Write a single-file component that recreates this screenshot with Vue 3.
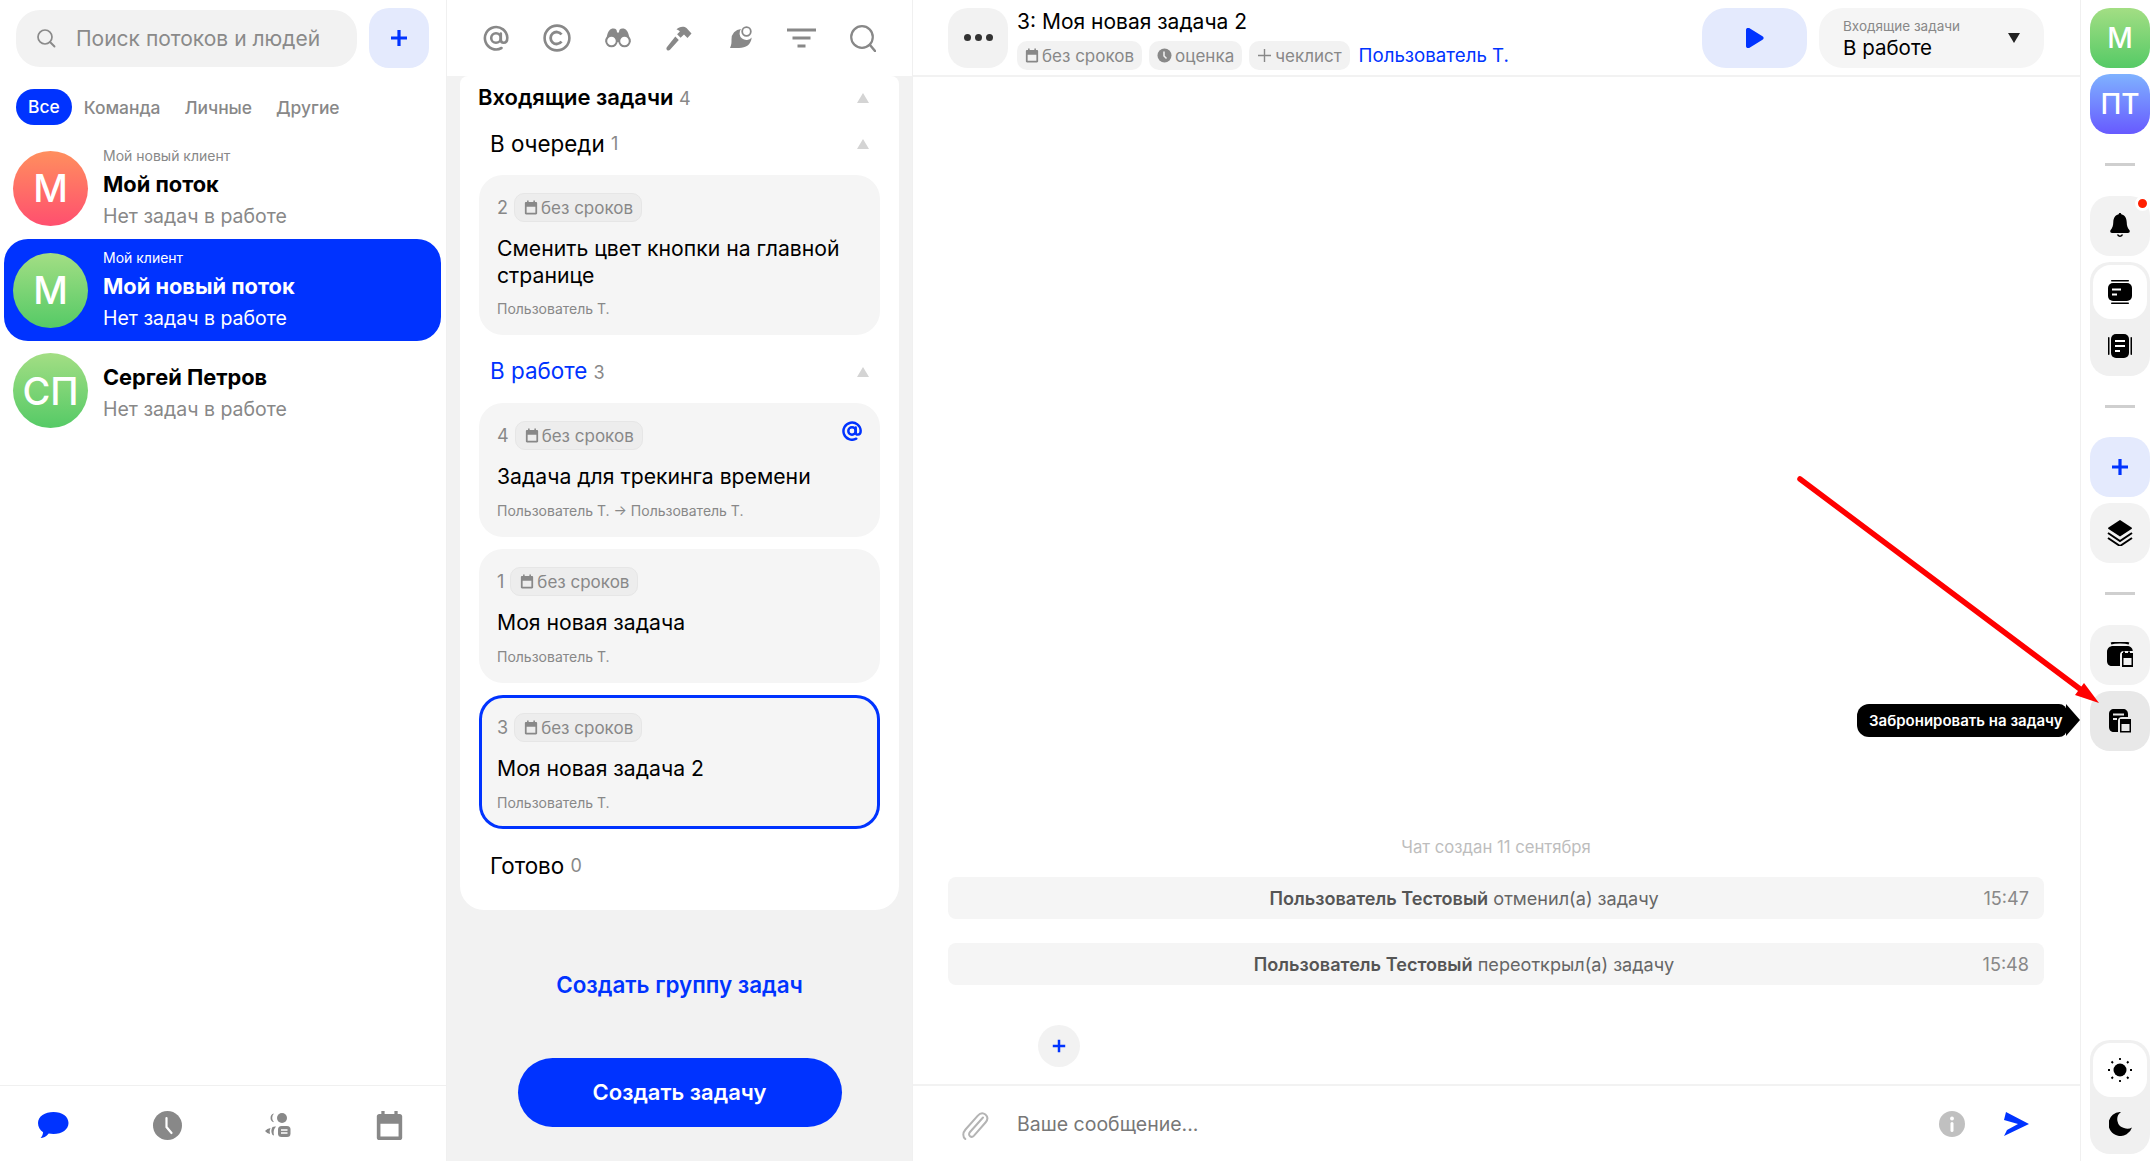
<script setup>
const tabs = ['Все', 'Команда', 'Личные', 'Другие']
const streams = [
  { id: 1, client: 'Мой новый клиент', title: 'Мой поток', initials: 'М', tone: 'red' },
  { id: 2, client: 'Мой клиент', title: 'Мой новый поток', initials: 'М', tone: 'green', active: true },
  { id: 3, client: '', title: 'Сергей Петров', initials: 'СП', tone: 'green' },
]
const queue = [
  { n: 2, title: 'Сменить цвет кнопки на главной странице', who: 'Пользователь Т.' },
]
const working = [
  { n: 4, title: 'Задача для трекинга времени', who: 'Пользователь Т. → Пользователь Т.', mention: true },
  { n: 1, title: 'Моя новая задача', who: 'Пользователь Т.' },
  { n: 3, title: 'Моя новая задача 2', who: 'Пользователь Т.', active: true },
]
const events = [
  { who: 'Пользователь Тестовый', what: 'отменил(а) задачу', time: '15:47' },
  { who: 'Пользователь Тестовый', what: 'переоткрыл(а) задачу', time: '15:48' },
]
</script>

<template>
  <div class="app">
    <svg class="defs" width="0" height="0" aria-hidden="true">
      <defs>
        <symbol id="cal" viewBox="0 0 16 16">
          <path fill="currentColor" d="M3.500 0h1.800v1.600h5.400V0h1.800v1.600h1.200c.7 0 1.300.6 1.300 1.300v11.800c0 .7-.6 1.300-1.300 1.300H2.300c-.7 0-1.300-.6-1.300-1.300V2.900c0-.7.6-1.300 1.300-1.300h1.200V0zM3 7v7h10V7H3z"/>
        </symbol>
        <symbol id="plus" viewBox="0 0 18 18">
          <path fill="currentColor" d="M7.400 1h3.200v6.400H17v3.200h-6.400V17H7.400v-6.400H1V7.400h6.400z"/>
        </symbol>
      </defs>
    </svg>

    <aside class="streams">
      <div class="search-row">
        <label class="search">
          <svg class="search-ico" viewBox="0 0 20 20" width="20" height="20"><circle cx="9" cy="9" r="7" fill="none" stroke="#8a8a8a" stroke-width="1.700"/><path d="M14 14l4.500 4.500" stroke="#8a8a8a" stroke-width="1.900" stroke-linecap="round"/></svg>
          <span>Поиск потоков и людей</span>
        </label>
        <button class="add-btn"><svg width="18" height="18"><use href="#plus"/></svg></button>
      </div>
      <nav class="tabs">
        <span v-for="(t, i) in tabs" :key="t" class="tab" :class="{ on: i === 0 }">{{ t }}</span>
      </nav>
      <ul class="stream-list">
        <li v-for="s in streams" :key="s.id" class="stream" :class="{ active: s.active, plain: !s.client }">
          <div class="avatar" :class="s.tone">{{ s.initials }}</div>
          <div class="stream-text">
            <div v-if="s.client" class="client">{{ s.client }}</div>
            <div class="stream-title">{{ s.title }}</div>
            <div class="stream-sub">Нет задач в работе</div>
          </div>
        </li>
      </ul>
      <footer class="bottom-nav">
        <svg width="31" height="27" viewBox="0 0 31 27"><path fill="#0033ff" d="M15.500 0C24 0 30.500 4.400 30.500 11c0 6.500-6.500 11-15 11-1.700 0-3.300-.2-4.800-.5C8.500 24.500 5 26 2.600 26c1.500-1.500 2.200-3.400 2.500-5.700C1.900 18.200 0 15 0 11 0 4.400 7 0 15.500 0z"/></svg>
        <svg width="29" height="29" viewBox="0 0 29 29"><circle cx="14.500" cy="14.500" r="14.500" fill="#888"/><path d="M13.500 7v9l5 6" fill="none" stroke="#fff" stroke-width="2.200" stroke-linecap="round"/></svg>
        <svg width="26" height="26" viewBox="0 0 26 26"><circle cx="17" cy="6" r="5" fill="#888"/><path fill="#888" d="M9 1.600a4.400 4.400 0 0 0 0 8.600A6 6 0 0 1 9 1.600zM11 14.500a10 10 0 0 0-2 9 7 7 0 0 1-1.500-.6 8 8 0 0 1 0-8A7 7 0 0 1 11 14.500zM5.500 16a8 8 0 0 0-.5 6A8 8 0 0 1 0 19a8 8 0 0 1 5.500-3z"/><rect x="13" y="14" width="12.500" height="11" rx="3.500" fill="#888"/><path d="M16 18h6.500M16 21h6.500" stroke="#fff" stroke-width="1.500"/></svg>
        <svg class="nav-cal" width="29" height="29"><use href="#cal"/></svg>
      </footer>
    </aside>

    <section class="tasks">
      <div class="tools">
        <svg width="26" height="26" viewBox="0 0 26 26" fill="none" stroke="#888" stroke-width="2.600"><circle cx="13" cy="13" r="4.800"/><path d="M17.800 8.500v6c0 2 1 3.200 2.800 3.200 2 0 3.700-1.800 3.700-5A11.200 11.200 0 1 0 18.500 23" stroke-linecap="round"/></svg>
        <svg width="28" height="28" viewBox="0 0 28 28" fill="none" stroke="#888"><circle cx="14" cy="14" r="12.400" stroke-width="2.600"/><path d="M18.500 10.500A6 6 0 1 0 18.500 17.500" stroke-width="2.800"/></svg>
        <svg width="26" height="20" viewBox="0 0 26 20"><path fill="#888" d="M2 8C3 3 5 .5 8.500.5c2.500 0 3.500 1.500 3.500 4h2c0-2.500 1-4 3.500-4C21 .5 23 3 24 8l1.500 6h-25z"/><circle cx="6.500" cy="13" r="5.300" fill="#fff" stroke="#888" stroke-width="2"/><circle cx="19.500" cy="13" r="5.300" fill="#fff" stroke="#888" stroke-width="2"/></svg>
        <svg width="26" height="25" viewBox="0 0 26 25"><path fill="#888" d="M10.500 3.500C13 .5 18 0 20.500 2l5 5.500-4 4.500-3.500-3.500-3.400 3.300-3.500-3.500 2.800-2.800C13 4.500 11.800 3.700 10.500 3.500zM9.300 10.500l3.500 3.500L4 23.800c-.9.900-2.200.9-3 .1-.8-.8-.8-2.100 0-3z"/></svg>
        <svg width="25" height="25" viewBox="0 0 25 25"><path fill="#888" d="M13 3a10 10 0 0 0-9.500 10.500c0 2.700.2 5-1.500 8.500h9c7 0 12-3.500 12.700-10.500A6.500 6.500 0 0 1 13 3z"/><circle cx="18.500" cy="5.500" r="4.300" fill="#fff" stroke="#888" stroke-width="1.800"/></svg>
        <svg width="31" height="20" viewBox="0 0 31 20"><path d="M1 2h29M6.500 10h18M11.500 18h8" stroke="#888" stroke-width="3"/></svg>
        <svg width="27" height="27" viewBox="0 0 27 27" fill="none" stroke="#888"><circle cx="13" cy="12" r="10.800" stroke-width="2.200"/><path d="M21 20l5 6" stroke-width="2.500" stroke-linecap="round"/></svg>
      </div>
      <div class="board">
        <div class="board-card">
          <header class="group-head top">
            <h2>Входящие задачи <small>4</small></h2><i class="tri"></i>
          </header>

          <header class="group-head">
            <h3>В очереди <small class="up">1</small></h3><i class="tri"></i>
          </header>
          <article v-for="t in queue" :key="t.n" class="task">
            <div class="task-top"><span class="num">{{ t.n }}</span><span class="chip"><svg width="14" height="15"><use href="#cal"/></svg>без сроков</span></div>
            <div class="task-title">{{ t.title }}</div>
            <div class="who">{{ t.who }}</div>
          </article>

          <header class="group-head second">
            <h3 class="blue">В работе <small>3</small></h3><i class="tri"></i>
          </header>
          <div class="task-stack">
            <article v-for="t in working" :key="t.n" class="task" :class="{ current: t.active }">
              <div class="task-top">
                <span class="num">{{ t.n }}</span><span class="chip"><svg width="14" height="15"><use href="#cal"/></svg>без сроков</span>
                <svg v-if="t.mention" class="mention" width="20" height="20" viewBox="0 0 26 26" fill="none" stroke="#0033ff" stroke-width="3.200"><circle cx="13" cy="13" r="4.800"/><path d="M17.800 8.500v6c0 2 1 3.200 2.800 3.200 2 0 3.700-1.800 3.700-5A11.200 11.200 0 1 0 18.500 23" stroke-linecap="round"/></svg>
              </div>
              <div class="task-title">{{ t.title }}</div>
              <div class="who">{{ t.who }}</div>
            </article>
          </div>

          <header class="group-head done">
            <h3>Готово <small class="up">0</small></h3>
          </header>
        </div>
        <a class="new-group">Создать группу задач</a>
        <button class="new-task">Создать задачу</button>
      </div>
    </section>

    <main class="chat">
      <header class="chat-head">
        <button class="dots"><i></i><i></i><i></i></button>
        <div class="head-info">
          <div class="head-title">3: Моя новая задача 2</div>
          <div class="head-meta">
            <span class="meta-chip"><svg width="14" height="15"><use href="#cal"/></svg>без сроков</span>
            <span class="meta-chip"><svg width="15" height="15" viewBox="0 0 15 15"><circle cx="7.500" cy="7.500" r="7" fill="currentColor"/><path d="M7 3.500v4.500l2.500 2.500" fill="none" stroke="#f2f2f2" stroke-width="1.500"/></svg>оценка</span>
            <span class="meta-chip"><svg width="15" height="15" viewBox="0 0 15 15"><path d="M7.500 1v13M1 7.500h13" stroke="currentColor" stroke-width="1.400"/></svg>чеклист</span>
            <a class="owner">Пользователь Т.</a>
          </div>
        </div>
        <button class="play"><svg width="18" height="20" viewBox="0 0 18 20"><path fill="#0033ff" d="M0 2C0 .4 1.500-.5 3-.1l13.500 8.300c1.500.9 1.500 2.700 0 3.600L3 20.100C1.500 20.500 0 19.600 0 18z"/></svg></button>
        <div class="status">
          <div class="status-text"><span>Входящие задачи</span><b>В работе</b></div>
          <i class="tri-down"></i>
        </div>
      </header>

      <div class="feed">
        <div class="created">Чат создан 11 сентября</div>
        <div v-for="e in events" :key="e.time" class="event">
          <span class="event-text"><b>{{ e.who }}</b> {{ e.what }}</span>
          <time>{{ e.time }}</time>
        </div>
        <button class="quick-add"><svg width="14" height="14"><use href="#plus"/></svg></button>
      </div>

      <footer class="composer">
        <svg class="clip" width="30" height="30" viewBox="0 0 30 30" fill="none" stroke="#b4b4b4" stroke-width="2" stroke-linecap="round"><path d="M23 6.500L10 21c-1.500 1.700-1 3.400 0 4.200 1.100.9 2.800.7 4-.6L25.500 11.500c2.500-2.900 2.200-6-.1-8-2.300-1.900-5.400-1.400-7.800 1.300L5.500 18.500c-3 3.500-2.800 7.300-.2 9.500"/></svg>
        <span class="placeholder">Ваше сообщение...</span>
        <svg class="info" width="26" height="26" viewBox="0 0 26 26"><circle cx="13" cy="13" r="13" fill="#c0c0c0"/><rect x="11.500" y="11" width="3" height="10" rx="1.500" fill="#fff"/><circle cx="13" cy="7.500" r="1.900" fill="#fff"/></svg>
        <svg class="send" width="25" height="24" viewBox="0 0 25 24"><path fill="#0033ff" d="M2 0l23 12L0 24l3-6 11-6L0 8z"/></svg>
      </footer>
    </main>

    <aside class="rail">
      <button class="tile av green">М</button>
      <button class="tile av violet">ПТ</button>
      <hr>
      <button class="tile bell">
        <svg width="20" height="26" viewBox="0 0 20 26"><path d="M10 0c.7 0 1.200.5 1.300 1.200C15 2 16.500 5 16.700 9c.1 4 1 6 2.600 8 1 1.200.3 3-1.300 3H2c-1.600 0-2.300-1.800-1.300-3C2.300 15 3.200 13 3.300 9 3.500 5 5 2 8.700 1.200 8.800.5 9.300 0 10 0z"/><path d="M6.800 21.500a3.300 3.300 0 0 0 6.400 0h-1.800a1.500 1.500 0 0 1-2.800 0z"/></svg>
        <em class="dot"></em>
      </button>
      <div class="switch">
        <button class="sw on">
          <svg width="24" height="24" viewBox="0 0 24 24"><rect x="3" y="0" width="18" height="1.500" rx=".7"/><rect x="3" y="22.500" width="18" height="1.500" rx=".7"/><rect y="3" width="24" height="18" rx="5"/><path d="M4 9.500h9M4 14.500h5" stroke="#fff" stroke-width="2"/></svg>
        </button>
        <button class="sw">
          <svg width="24" height="24" viewBox="0 0 24 24"><rect x="0" y="3" width="1.500" height="18" rx=".7"/><rect x="22.500" y="3" width="1.500" height="18" rx=".7"/><rect x="3" width="18" height="24" rx="5"/><path d="M7 7h10M7 12h10M7 17h5" stroke="#fff" stroke-width="2"/></svg>
        </button>
      </div>
      <hr>
      <button class="tile tint"><svg width="18" height="18"><use href="#plus"/></svg></button>
      <button class="tile">
        <svg width="26" height="26" viewBox="0 0 26 26"><path d="M13 0l11.500 7.500c.6.400.6 1.100 0 1.500L13 16.500 1.500 9c-.6-.4-.6-1.100 0-1.500z"/><path d="M1 13l12 8 12-8M1 18l12 8 12-8" fill="none" stroke="#000" stroke-width="2"/></svg>
      </button>
      <hr>
      <button class="tile">
        <svg width="26" height="26" viewBox="0 0 26 26"><path d="M4 1.500C8 0 18 0 22 1.500" fill="none" stroke="#000" stroke-width="2"/><path d="M0 10c0-4 3-6 6-6h14c3 0 5.500 1.500 5.800 5H17a4 4 0 0 0-4 4v11H5c-3 0-5-2-5-5z"/><path d="M16 11v-1.500h2V11h3V9.500h2V11h3v14H15V11z"/><rect x="16.500" y="16" width="8" height="7" fill="#f2f2f2"/></svg>
      </button>
      <button class="tile hover">
        <svg width="22" height="24" viewBox="0 0 22 24"><path d="M5 0h9c3 0 5 2 5 5v3h-6a4 4 0 0 0-4 4v11H5c-3 0-5-2-5-5V5c0-3 2-5 5-5z"/><path d="M4 5.500h11" stroke="#e8e8e8" stroke-width="2"/><path d="M4 10h4" stroke="#e8e8e8" stroke-width="2"/><path d="M11 10h11v13.500H11z"/><rect x="12.500" y="15" width="8" height="7" fill="#e8e8e8"/></svg>
        <span class="tooltip">Забронировать на задачу</span>
      </button>
      <div class="switch theme">
        <button class="sw on">
          <svg width="26" height="26" viewBox="0 0 26 26"><circle cx="13" cy="13" r="6.500"/><path d="M13 1v2M13 23v2M1 13h2M23 13h2M4.500 4.500l1.500 1.500M20 20l1.500 1.500M4.500 21.500L6 20M20 6l1.500-1.500" stroke="#000" stroke-width="1.800"/></svg>
        </button>
        <button class="sw">
          <svg width="23" height="24" viewBox="0 0 23 24"><path d="M12 0a12 12 0 1 0 11 15.500A8.500 8.500 0 0 1 15 16 9 9 0 0 1 12 0z"/></svg>
        </button>
      </div>
    </aside>

    <svg class="annotation" width="2155" height="1161" viewBox="0 0 2155 1161" aria-hidden="true">
      <path d="M1800 479L2088 695" stroke="#ff0000" stroke-width="5.500" stroke-linecap="round"/>
      <path d="M2099 703L2075 695L2084 683z" fill="#ff0000"/>
    </svg>
  </div>
</template>

<style>
html, body { margin: 0; background: #fff; }
</style>

<style scoped>
* { box-sizing: border-box; }
button { border: 0; padding: 0; font: inherit; cursor: pointer; }
ul { list-style: none; margin: 0; padding: 0; }
h2, h3 { margin: 0; }
.defs { position: absolute; }
.app {
  position: relative;
  display: grid;
  grid-template-columns: 447px 465px 1fr 74px;
  width: 2155px;
  height: 1161px;
  overflow: hidden;
  font-family: Inter, "Noto Sans", sans-serif;
  color: #000;
  background: #fff;
}

/* Streams */
.streams { display: flex; flex-direction: column; border-right: 1px solid #f0f0f0; min-height: 0; }
.search-row { display: flex; align-items: center; gap: 12px; padding: 8px 17px 0 16px; }
.search {
  flex: 1; height: 57px; display: flex; align-items: center; gap: 20px; padding-left: 20px;
  background: #f2f2f2; border-radius: 24px; color: #8a8a8a; font-size: 21px;
}
.add-btn { width: 60px; height: 60px; border-radius: 20px; background: #e4eafd; color: #0033ff; display: flex; align-items: center; justify-content: center; }
.tabs { display: flex; align-items: center; gap: 24px; margin: 21px 0 0 16px; height: 36px; font-size: 17.400px; color: #888; font-weight: 500; }
.tab.on { background: #0033ff; color: #fff; border-radius: 18px; padding: 0 12px; height: 36px; line-height: 36px; margin-right: -12px; }
.stream-list { margin-top: 12px; padding: 0 5px 0 4px; flex: 1; }
.stream { height: 102px; display: flex; align-items: center; gap: 15px; padding-left: 9px; border-radius: 24px; }
.stream.active { background: #0033ff; color: #fff; }
.stream.plain .avatar { margin-top: -3px; }
.stream.plain .stream-text { margin-top: 1px; }
.avatar {
  width: 75px; height: 75px; border-radius: 50%; flex: none; color: #fff; font-size: 38px; font-weight: 500;
  display: flex; align-items: center; justify-content: center;
}
.stream-text { margin-top: 2px; }
.red { background: linear-gradient(#ff8f5e, #ff4f6f); }
.green { background: linear-gradient(#a3de84, #55ca66); }
.violet { background: linear-gradient(#7fb2ff, #675aff); }
.client { font-size: 14px; line-height: 18px; color: #888; margin-bottom: 4px; }
.stream-title { font-size: 21.800px; line-height: 30px; font-weight: 700; margin-bottom: 2px; }
.stream-sub { font-size: 19.500px; line-height: 30px; color: #888; }
.active .client, .active .stream-sub { color: #fff; }
.bottom-nav { height: 76px; border-top: 1px solid #f0f0f0; display: flex; justify-content: space-between; align-items: center; padding: 3px 42px 0 38px; }
.nav-cal { color: #888; }

/* Tasks */
.tasks { background: #f2f2f2; display: flex; flex-direction: column; min-height: 0; }
.tools { height: 76px; flex: none; background: #fff; display: grid; grid-template-columns: repeat(7, 61px); justify-items: center; align-items: center; padding-left: 18.500px; }
.board { display: flex; flex-direction: column; align-items: center; }
.board-card { width: 439px; background: #fff; border-radius: 8px 8px 24px 24px; padding: 6px 19px 28px; }
.group-head { display: flex; align-items: center; justify-content: space-between; height: 32px; padding: 0 11px 0 11px; margin-top: 14px; margin-bottom: 15px; }
.group-head.top { padding-left: 0; margin-top: 0; margin-bottom: 14px; }
.group-head.second { margin-top: 21px; }
.group-head.done { margin: 21px 0 0; }
h2 { font-size: 22px; line-height: 32px; font-weight: 600; margin-left: -1px; }
h3 { font-size: 22.400px; line-height: 32px; font-weight: 400; }
h3.blue { color: #0033ff; }
small { font-size: 18px; font-weight: 400; color: #888; }
small.up { vertical-align: 2px; }
.tri { width: 0; height: 0; border-left: 6px solid transparent; border-right: 6px solid transparent; border-bottom: 10px solid #d4d4d4; }
.task { background: #f5f5f5; border-radius: 24px; padding: 18px 18px 16px; position: relative; }
.task-stack { display: flex; flex-direction: column; gap: 12.500px; }
.task.current { box-shadow: inset 0 0 0 3px #0033ff; }
.task-top { display: flex; align-items: center; gap: 6px; }
.num { font-size: 18px; color: #888; }
.chip { height: 29px; display: inline-flex; align-items: center; gap: 3px; padding: 0 8px 0 9px; border-radius: 10px; background: #ededed; border: 1px solid #e6e6e6; color: #888; font-size: 17px; }
.mention { position: absolute; top: 18px; right: 18px; }
.task-title { margin-top: 13px; font-size: 21.200px; line-height: 26.500px; }
.who { margin-top: 11px; font-size: 14px; line-height: 20px; color: #888; }
.new-group { margin-top: 60px; font-size: 22.400px; line-height: 30px; font-weight: 600; color: #0033ff; }
.new-task { margin-top: 58px; width: 324px; height: 69px; border-radius: 35px; background: #0033ff; color: #fff; font-size: 22px; font-weight: 600; }

/* Chat */
.chat { display: flex; flex-direction: column; min-width: 0; min-height: 0; border-left: 1px solid #f0f0f0; border-right: 1px solid #f0f0f0; }
.chat-head { height: 77px; flex: none; display: flex; align-items: center; border-bottom: 2px solid #f2f2f2; padding: 0 36px 0 35px; }
.dots { width: 60px; height: 60px; border-radius: 20px; background: #f2f2f2; display: flex; align-items: center; justify-content: center; gap: 4px; flex: none; }
.dots i { width: 7px; height: 7px; border-radius: 50%; background: #333; }
.head-info { flex: 1; padding: 3px 0 0 9px; }
.head-title { font-size: 21px; line-height: 28px; }
.head-meta { margin-top: 5px; display: flex; align-items: center; gap: 7px; }
.meta-chip { height: 29px; display: inline-flex; align-items: center; gap: 3px; padding: 0 8px; border-radius: 10px; background: #f2f2f2; color: #888; font-size: 17px; }
.owner { color: #0033ff; font-size: 18.700px; margin-left: 2px; }
.play { width: 105px; height: 60px; border-radius: 24px; background: #e4eafd; display: flex; align-items: center; justify-content: center; margin-right: 12px; }
.status { width: 225px; height: 60px; border-radius: 24px; background: #f5f5f5; display: flex; align-items: center; justify-content: space-between; padding: 0 24px; }
.status-text { display: flex; flex-direction: column; }
.status-text span { font-size: 13.500px; line-height: 18px; color: #888; margin-top: 2px; }
.status-text b { font-size: 20.500px; line-height: 26px; font-weight: 400; }
.tri-down { width: 0; height: 0; border-left: 6.500px solid transparent; border-right: 6.500px solid transparent; border-top: 10px solid #222; }
.feed { flex: 1; display: flex; flex-direction: column; justify-content: flex-end; padding: 0 36px 17px 35px; }
.created { text-align: center; font-size: 16.700px; line-height: 24px; color: #bdbdbd; margin-bottom: 18px; }
.event { height: 42px; border-radius: 8px; background: #f5f5f5; display: flex; align-items: center; justify-content: center; padding-right: 64px; font-size: 18.100px; color: #666; position: relative; margin-bottom: 24px; }
.event b { font-weight: 600; color: #555; }
.event time { position: absolute; right: 15px; color: #888; }
.quick-add { width: 42px; height: 42px; border-radius: 50%; background: #f2f2f2; color: #0033ff; margin: 16px 0 0 90px; display: flex; align-items: center; justify-content: center; }
.composer { height: 77px; flex: none; border-top: 2px solid #f2f2f2; display: flex; align-items: center; padding: 0 51px 0 47px; }
.clip { flex: none; margin-right: 27px; transform: translateY(2px); }
.placeholder { flex: 1; font-size: 19.500px; color: #777; }
.info { margin-right: 39px; }

/* Right rail */
.rail { display: flex; flex-direction: column; align-items: center; padding: 8px 0 0 4px; min-height: 0; position: relative; }
.tile { width: 60px; height: 60px; border-radius: 20px; display: flex; align-items: center; justify-content: center; flex: none; position: relative; margin-bottom: 6px; color: #000; }
.tile:not(.av) { background: #f2f2f2; }
.tile.av { color: #fff; font-size: 28px; font-weight: 500; }
.rail hr { width: 30px; height: 3px; border: 0; background: #cfcfcf; margin: 23px 0 29.500px; flex: none; }
.tile.tint { background: #e4eafd; color: #0033ff; }
.tile.hover { background: #e8e8e8; }
.dot { position: absolute; top: 0; right: 0; border: 3px solid #fff; border-radius: 50%; background: #ff1f00; box-sizing: content-box; width: 9px; height: 9px; }
.switch { width: 60px; height: 114px; border-radius: 20px; background: #f0f0f0; padding: 3px; flex: none; display: flex; flex-direction: column; margin-bottom: 6px; }
.sw { height: 54px; flex: none; border-radius: 18px; background: transparent; display: flex; align-items: center; justify-content: center; }
.sw.on { background: #fff; }
.sw svg { flex: none; }
.theme { margin-top: auto; margin-bottom: 7px; }
.tooltip {
  position: absolute; right: 83px; top: 13px; height: 33px; padding: 0 8px 0 12px; width: 210px; line-height: 33px; white-space: nowrap; text-align: left;
  background: #000; color: #fff; font-size: 15px; font-weight: 600; border-radius: 12px 8px 8px 12px;
}
.tooltip::after { content: ""; position: absolute; left: 100%; top: 0; margin-left: -1px; border-left: 14px solid #000; border-top: 16.500px solid transparent; border-bottom: 16.500px solid transparent; }
.annotation { position: absolute; inset: 0; pointer-events: none; }
</style>
